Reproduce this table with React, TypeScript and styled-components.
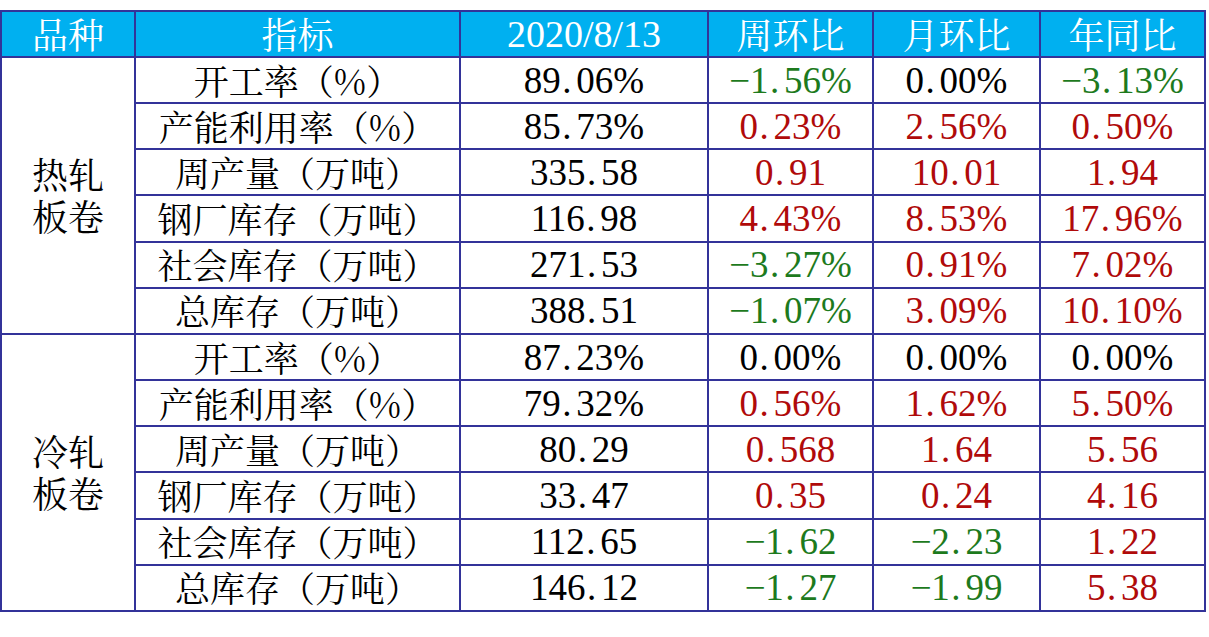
import React from "react";
import styled, { createGlobalStyle } from "styled-components";

const Global = createGlobalStyle`
  html, body { margin: 0; padding: 0; background: #ffffff; }
  body { font-family: "Noto Serif CJK SC", serif; }
`;

const SERIF = `"Liberation Serif", serif`;
const CJK = `"Noto Serif CJK SC", serif`;

const Page = styled.div`
  padding-top: 10px;
  width: 1209px;
`;

const Table = styled.table`
  border-collapse: collapse;
  table-layout: fixed;
  width: 1206px;
  border: 2px solid #333399;
`;

const HeadRow = styled.tr`
  height: 46px;
  background: #00b0f0;
`;

const BodyRow = styled.tr`
  height: 46.17px;
`;

const Th = styled.th<{ $num?: boolean }>`
  border: 2px solid #333399;
  padding: 0;
  color: #ffffff;
  font-weight: 400;
  font-size: ${(p) => (p.$num ? "38px" : "36px")};
  line-height: 1;
  text-align: center;
  vertical-align: middle;
  font-family: ${(p) => (p.$num ? SERIF : CJK)};
`;

const GroupCell = styled.td`
  border: 2px solid #333399;
  padding: 0;
  font-size: 36px;
  font-weight: 400;
  line-height: 42px;
  text-align: center;
  vertical-align: middle;
  color: #000000;
  font-family: ${CJK};
`;

const LabelCell = styled.td`
  border: 2px solid #333399;
  padding: 0;
  font-size: 35px;
  font-weight: 400;
  line-height: 1;
  text-align: center;
  vertical-align: middle;
  color: #000000;
  white-space: nowrap;
  font-family: ${CJK};
`;

type Tone = "plain" | "up" | "down";

const NumCell = styled.td<{ $tone: Tone }>`
  border: 2px solid #333399;
  padding: 0;
  font-size: 37px;
  font-weight: 400;
  line-height: 1;
  text-align: center;
  vertical-align: middle;
  white-space: nowrap;
  font-family: ${SERIF};
  color: ${(p) => (p.$tone === "up" ? "#b00a0a" : p.$tone === "down" ? "#1d7a1d" : "#000000")};
`;

const Dot = styled.span`
  display: inline-block;
  width: 0.42em;
  text-align: left;
  padding-left: 0.04em;
  box-sizing: border-box;
`;

const Minus = styled.span`
  display: inline-block;
  width: 0.56em;
  text-align: left;
`;

function Num({ text }: { text: string }) {
  const parts: React.ReactNode[] = [];
  text.split("").forEach((ch, i) => {
    if (ch === ".") parts.push(<Dot key={i}>.</Dot>);
    else if (ch === "-") parts.push(<Minus key={i}>−</Minus>);
    else parts.push(ch);
  });
  return <>{parts}</>;
}

function toneOf(v: string): Tone {
  const n = parseFloat(v);
  if (n > 0) return "up";
  if (n < 0) return "down";
  return "plain";
}

type Row = [string, string, string, string, string];

const groups: { name: [string, string]; rows: Row[] }[] = [
  {
    name: ["热轧", "板卷"],
    rows: [
      ["开工率（%）", "89.06%", "-1.56%", "0.00%", "-3.13%"],
      ["产能利用率（%）", "85.73%", "0.23%", "2.56%", "0.50%"],
      ["周产量（万吨）", "335.58", "0.91", "10.01", "1.94"],
      ["钢厂库存（万吨）", "116.98", "4.43%", "8.53%", "17.96%"],
      ["社会库存（万吨）", "271.53", "-3.27%", "0.91%", "7.02%"],
      ["总库存（万吨）", "388.51", "-1.07%", "3.09%", "10.10%"],
    ],
  },
  {
    name: ["冷轧", "板卷"],
    rows: [
      ["开工率（%）", "87.23%", "0.00%", "0.00%", "0.00%"],
      ["产能利用率（%）", "79.32%", "0.56%", "1.62%", "5.50%"],
      ["周产量（万吨）", "80.29", "0.568", "1.64", "5.56"],
      ["钢厂库存（万吨）", "33.47", "0.35", "0.24", "4.16"],
      ["社会库存（万吨）", "112.65", "-1.62", "-2.23", "1.22"],
      ["总库存（万吨）", "146.12", "-1.27", "-1.99", "5.38"],
    ],
  },
];

export default function App() {
  return (
    <>
      <Global />
      <Page>
        <Table>
          <colgroup>
            <col style={{ width: 134 }} />
            <col style={{ width: 325 }} />
            <col style={{ width: 248 }} />
            <col style={{ width: 165 }} />
            <col style={{ width: 167 }} />
            <col style={{ width: 165 }} />
          </colgroup>
          <thead>
            <HeadRow>
              <Th>品种</Th>
              <Th>指标</Th>
              <Th $num>2020/8/13</Th>
              <Th>周环比</Th>
              <Th>月环比</Th>
              <Th>年同比</Th>
            </HeadRow>
          </thead>
          <tbody>
            {groups.map((g) =>
              g.rows.map((r, i) => (
                <BodyRow key={g.name.join("") + i}>
                  {i === 0 && (
                    <GroupCell rowSpan={g.rows.length}>
                      {g.name[0]}
                      <br />
                      {g.name[1]}
                    </GroupCell>
                  )}
                  <LabelCell>{r[0]}</LabelCell>
                  <NumCell $tone="plain">
                    <Num text={r[1]} />
                  </NumCell>
                  <NumCell $tone={toneOf(r[2])}>
                    <Num text={r[2]} />
                  </NumCell>
                  <NumCell $tone={toneOf(r[3])}>
                    <Num text={r[3]} />
                  </NumCell>
                  <NumCell $tone={toneOf(r[4])}>
                    <Num text={r[4]} />
                  </NumCell>
                </BodyRow>
              ))
            )}
          </tbody>
        </Table>
      </Page>
    </>
  );
}
